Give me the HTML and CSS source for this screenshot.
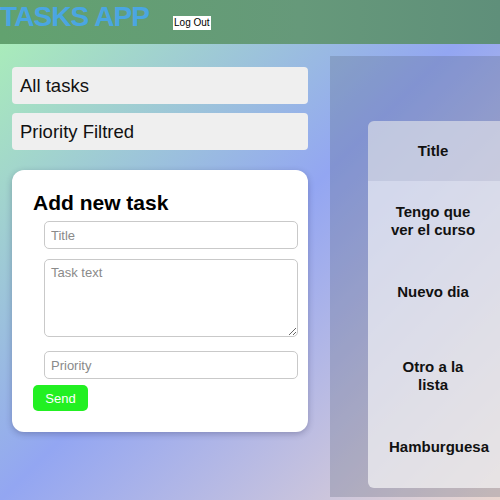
FILE: index.html
```html
<!DOCTYPE html>
<html lang="en">
<head>
<meta charset="utf-8">
<title>Tasks App</title>
<link rel="stylesheet" href="styles.css">
</head>
<body>
<header class="topbar">
  <h1 class="brand">TASKS APP</h1>
  <button class="logout" type="button">Log Out</button>
</header>
<main class="layout">
  <aside class="sidebar">
    <div class="filter">All tasks</div>
    <div class="filter">Priority Filtred</div>
    <form class="card">
      <h2 class="card-title">Add new task</h2>
      <input class="field" type="text" placeholder="Title">
      <textarea class="field area" placeholder="Task text"></textarea>
      <input class="field field-last" type="text" placeholder="Priority">
      <button class="send" type="button">Send</button>
    </form>
  </aside>
  <section class="board">
    <div class="table-wrap">
      <table class="tasks">
        <colgroup>
          <col class="col-title">
          <col class="col-rest">
        </colgroup>
        <thead>
          <tr><th>Title</th><th></th></tr>
        </thead>
        <tbody>
          <tr class="r1"><td>Tengo que ver el curso</td><td></td></tr>
          <tr class="r2"><td>Nuevo dia</td><td></td></tr>
          <tr class="r3"><td>Otro a la lista</td><td></td></tr>
          <tr class="r4"><td>Hamburguesa</td><td></td></tr>
        </tbody>
      </table>
    </div>
  </section>
</main>
</body>
</html>
```
FILE: styles.css
```css
html {
  margin: 0;
  height: 100%;
  overflow: hidden;
  background: linear-gradient(135deg, #abf2b5 0%, #93a6f2 50%, #ead6d0 100%);
}

body {
  margin: 0;
  height: 100%;
  overflow: hidden;
  font-family: "Liberation Sans", Arial, sans-serif;
  color: #111;
}

.topbar {
  display: flex;
  align-items: flex-start;
  height: 44px;
  background: linear-gradient(90deg, #62a26f 0%, #66997a 60%, #5f8f7a 100%);
}

.brand {
  margin: 1px 0 0 0;
  font-size: 28px;
  letter-spacing: -0.9px;
  font-weight: bold;
  color: #4aa6e2;
  line-height: 32px;
}

.logout {
  margin: 16px 0 0 24px;
  padding: 1px 1px;
  border: none;
  border-radius: 0;
  background: #fff;
  color: #000;
  font-family: "Liberation Sans", Arial, sans-serif;
  font-size: 10px;
  line-height: 12px;
}

.layout {
  display: flex;
  align-items: flex-start;
  padding-top: 12px;
}

.sidebar {
  flex: 0 0 296px;
  margin: 11px 0 0 12px;
  display: flex;
  flex-direction: column;
  gap: 9px;
}

.filter {
  height: 37px;
  display: flex;
  align-items: center;
  padding-left: 8px;
  background: #efefef;
  border-radius: 4px;
  font-size: 18.5px;
  color: #111;
}

.card {
  margin-top: 11px;
  padding: 21px 10px 21px 21px;
  background: #fff;
  border-radius: 12px;
  box-shadow: 0 2px 6px rgba(40, 40, 80, 0.3);
  display: flex;
  flex-direction: column;
  align-items: flex-start;
}

.card-title {
  margin: 0 0 6px 0;
  font-size: 21px;
  line-height: 24px;
  font-weight: bold;
  color: #000;
}

.field {
  display: block;
  box-sizing: border-box;
  margin-left: 11px;
  width: calc(100% - 11px);
  height: 28px;
  padding: 0 6px;
  border: 1px solid #c9c9c9;
  border-radius: 5px;
  font-family: "Liberation Sans", Arial, sans-serif;
  font-size: 13px;
  color: #333;
  background: #fff;
}

.field::placeholder {
  color: #8a8a8a;
}

.area {
  margin-top: 10px;
  height: 78px;
  padding: 5px 6px;
  resize: vertical;
}

.field-last {
  margin-top: 14px;
}

.send {
  margin-top: 6px;
  width: 55px;
  height: 26px;
  border: none;
  border-radius: 5px;
  background: #22f022;
  color: #fff;
  font-family: "Liberation Sans", Arial, sans-serif;
  font-size: 13px;
}

.board {
  flex: 0 0 auto;
  margin-left: 22px;
  padding: 65px 0 9px 38px;
  background: rgba(80, 90, 110, 0.25);
}

.table-wrap {
  width: 430px;
  border-radius: 6px;
  overflow: hidden;
  background: rgba(255, 255, 255, 0.62);
}

.tasks {
  width: 100%;
  table-layout: fixed;
  border-collapse: collapse;
  font-size: 15px;
  font-weight: bold;
  color: #111;
}

.col-title { width: 130px; }
.col-rest { width: 300px; }

.tasks th {
  height: 60px;
  box-sizing: border-box;
  padding: 21px 21px;
  line-height: 18px;
  text-align: center;
  background: rgba(60, 70, 120, 0.1);
}

.tasks td {
  padding: 22px 21px;
  line-height: 18px;
  text-align: center;
  vertical-align: top;
}

.r1 { height: 80px; }
.r2 { height: 75px; }
.r3 { height: 80px; }
.r4 { height: 72px; }
```
